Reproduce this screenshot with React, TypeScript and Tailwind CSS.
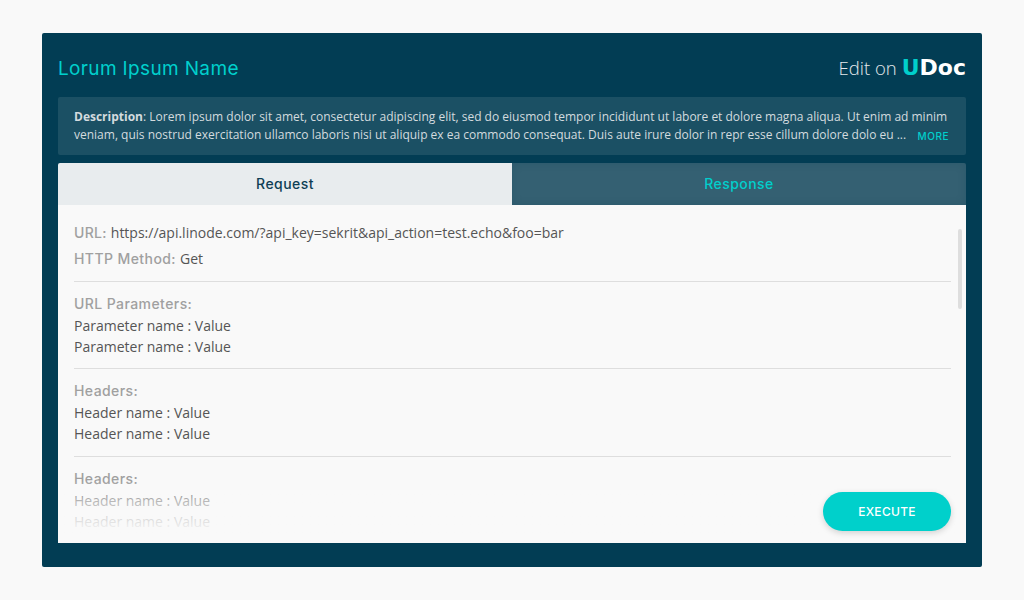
const HEADING = 'font-["Inter","Liberation_Sans",sans-serif]';
const BODY = 'font-["Open_Sans","Noto_Sans",sans-serif]';

function Section({ title, rows, top = 'pt-[11px]' }: { title: string; rows: string[]; top?: string }) {
  return (
    <div className={`border-b border-[#dedede] h-[88px] ${top} mr-[15px]`}>
      <p className={`${HEADING} text-[14px] leading-[21px] font-medium text-[#a0a0a0] tracking-[0.42px]`}>{title}</p>
      <div className="mt-[1px]">
        {rows.map((row, i) => (
          <p key={i} className={`${BODY} text-[14px] leading-[21px] text-[#555555]`}>{row}</p>
        ))}
      </div>
    </div>
  );
}

export default function App() {
  return (
    <div className="w-[1024px] h-[600px] bg-[#f9f9f9] flex items-center justify-center overflow-hidden">
      <div className="w-[940px] h-[534px] bg-[#023d54] rounded-[2px] px-4 flex flex-col">
        {/* Title bar */}
        <div className="h-[64px] pt-[5px] flex items-center justify-between shrink-0">
          <h1 className={`${HEADING} pt-[3px] text-[19px] font-normal text-[#00cfcc] tracking-[0.35px]`}>Lorum Ipsum Name</h1>
          <div className="flex items-baseline gap-[5px]">
            <span className={`${BODY} text-[18.5px] font-light text-[#e4e9ec]`}>Edit on</span>
            <span className={`font-["DejaVu_Sans",sans-serif] text-[22px] font-bold leading-none`}>
              <span className="text-[#00cfcc]">U</span>
              <span className="text-white">Doc</span>
            </span>
          </div>
        </div>

        {/* Description */}
        <div className={`${BODY} h-[58px] shrink-0 rounded-[2px] bg-[#1b5064] pl-4 pr-[17px] pt-[11px] text-[12px] leading-[18px] text-[#d3dbdf]`}>
          <p className="whitespace-nowrap">
            <span className="font-bold">Description</span>: Lorem ipsum dolor sit amet, consectetur adipiscing elit, sed do eiusmod tempor incididunt ut labore et dolore magna aliqua. Ut enim ad minim
          </p>
          <div className="flex justify-between">
            <p className="whitespace-nowrap">veniam, quis nostrud exercitation ullamco laboris nisi ut aliquip ex ea commodo consequat. Duis aute irure dolor in repr esse cillum dolore dolo eu ...</p>
            <span className={`${HEADING} pt-[3px] text-[10px] leading-[15px] font-medium text-[#00cfcc] tracking-[0.55px]`}>MORE</span>
          </div>
        </div>

        {/* Tabs */}
        <div className="mt-2 h-[42px] shrink-0 flex rounded-t-[2px] overflow-hidden">
          <div className={`${HEADING} flex-1 flex items-center justify-center pb-[2px] bg-[#e8ecee] text-[14px] font-medium text-[#0e3f55] tracking-[0.45px]`}>Request</div>
          <div className={`${HEADING} flex-1 flex items-center justify-center pb-[2px] bg-[#346072] shadow-[inset_0_0_8px_rgba(2,61,84,0.18)] text-[14px] font-medium text-[#00cfcc] tracking-[0.45px]`}>Response</div>
        </div>

        {/* Request body */}
        <div className="relative h-[338px] shrink-0 bg-[#f9f9f9] pl-4 overflow-hidden">
          <div className="border-b border-[#dedede] h-[77px] pt-[17px] mr-[15px]">
            <div className="flex items-baseline gap-[4px] h-[21px]">
              <span className={`${HEADING} text-[14px] leading-[21px] font-medium text-[#a0a0a0] tracking-[0.3px]`}>URL:</span>
              <span className={`${BODY} text-[14px] leading-[21px] text-[#555555]`}>https://api.linode.com/?api_key=sekrit&amp;api_action=test.echo&amp;foo=bar</span>
            </div>
            <div className="flex items-baseline gap-[4px] h-[21px] mt-[5px]">
              <span className={`${HEADING} text-[14px] leading-[21px] font-medium text-[#a0a0a0] tracking-[0.42px]`}>HTTP Method:</span>
              <span className={`${BODY} text-[14px] leading-[21px] text-[#555555]`}>Get</span>
            </div>
          </div>
          <div className="-mt-px" />
          <Section title="URL Parameters:" top="pt-[12px]" rows={['Parameter name : Value', 'Parameter name : Value']} />
          <Section title="Headers:" rows={['Header name : Value', 'Header name : Value']} />
          <Section title="Headers:" rows={['Header name : Value', 'Header name : Value']} />

          {/* fade over the cut-off rows */}
          <div className="absolute left-0 right-0 bottom-0 h-[62px] bg-gradient-to-b from-[#f9f9f9]/0 via-[#f9f9f9]/60 via-[32%] to-[#f9f9f9]/95 to-[78%]" />
          {/* scrollbar */}
          <div className="absolute right-[4px] top-[24px] w-1 h-[80px] rounded-full bg-[#dedede]" />
          <button className={`${HEADING} absolute right-[15px] bottom-[12px] w-[128px] h-[39px] rounded-full bg-[#00d0cb] text-[12px] font-medium text-white tracking-[0.3px] shadow-[0_2px_6px_rgba(0,0,0,0.16)]`}>EXECUTE</button>
        </div>
      </div>
    </div>
  );
}
